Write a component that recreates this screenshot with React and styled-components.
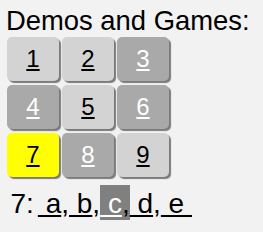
import React from "react";
import styled, { createGlobalStyle } from "styled-components";

const Global = createGlobalStyle`
  html, body { margin: 0; padding: 0; background: #f2f2f2; }
  body { font-family: "Liberation Sans", Arial, sans-serif; color: #000; }
`;

const Page = styled.div`
  padding: 5px 0 0 6px;
`;

const Title = styled.div`
  font-size: 27.4px;
  line-height: 32px;
`;

const Grid = styled.div`
  display: grid;
  grid-template-columns: repeat(3, 52px);
  grid-auto-rows: 44px;
  column-gap: 3px;
  row-gap: 4px;
  padding-left: 1px;
`;

const Tile = styled.a`
  display: flex;
  align-items: center;
  justify-content: center;
  border-radius: 5px;
  box-shadow: 2px 2px 1px #7a7a7a;
  font-size: 24px;
  text-decoration: underline;
  background: ${(p) => (p.$tone === "yellow" ? "#ffff00" : p.$tone === "dark" ? "#a9a9a9" : "#d3d3d3")};
  color: ${(p) => (p.$tone === "dark" ? "#ffffff" : "#000000")};
  cursor: pointer;
`;

const Line = styled.div`
  margin-top: 11px;
  padding-left: 4.5px;
  font-size: 28px;
  line-height: 32px;
  white-space: pre;
`;

const Choices = styled.span`
  margin-left: 4px;
`;

const Item = styled.span`
  padding: 3px 0;
  background: ${(p) => (p.$selected ? "#808080" : "transparent")};
`;

const Choice = styled.a`
  text-decoration: underline;
  color: ${(p) => (p.$selected ? "#ffffff" : "#000000")};
  cursor: pointer;
`;

const tiles = [
  { n: 1, tone: "light" },
  { n: 2, tone: "light" },
  { n: 3, tone: "dark" },
  { n: 4, tone: "dark" },
  { n: 5, tone: "light" },
  { n: 6, tone: "dark" },
  { n: 7, tone: "yellow" },
  { n: 8, tone: "dark" },
  { n: 9, tone: "light" },
];

const letters = ["a", "b", "c", "d", "e"];

export default function App() {
  return (
    <Page>
      <Global />
      <Title>Demos and Games:</Title>
      <Grid>
        {tiles.map((t) => (
          <Tile key={t.n} $tone={t.tone}>
            {t.n}
          </Tile>
        ))}
      </Grid>
      <Line>
        7:
        <Choices>
          {letters.map((l, i) => {
            const last = i === letters.length - 1;
            const sel = l === "c";
            return (
              <Item key={l} $selected={sel}>
                <Choice $selected={sel}>{last ? ` ${l} ` : ` ${l}`}</Choice>
                {last ? "" : ","}
              </Item>
            );
          })}
        </Choices>
      </Line>
    </Page>
  );
}
